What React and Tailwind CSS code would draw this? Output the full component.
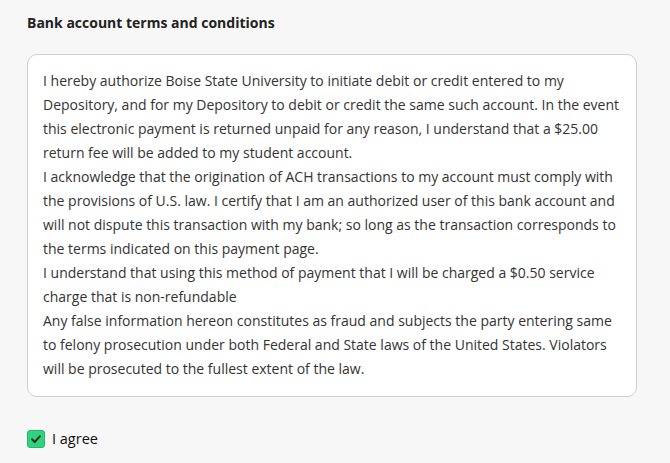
export default function App() {
  return (
    <div className="min-h-[463px] bg-[#f7f7f7] px-[27px] pt-[12px] text-[#333] [font-family:'Open_Sans',sans-serif]">
      <h2 className="text-[14px] leading-[22px] font-bold text-[#222]">
        Bank account terms and conditions
      </h2>
      <div className="mt-[20px] w-[610px] rounded-[10px] border border-[#cfcfcf] bg-white pl-[15px] pr-[12px] pt-[14px] pb-[15px] text-[14px] leading-[24px]">
        <p>
          I hereby authorize Boise State University to initiate debit or credit entered to my
          Depository, and for my Depository to debit or credit the same such account. In the event
          this electronic payment is returned unpaid for any reason, I understand that a $25.00
          return fee will be added to my student account.
        </p>
        <p>
          I acknowledge that the origination of ACH transactions to my account must comply with
          the provisions of U.S. law. I certify that I am an authorized user of this bank account and
          will not dispute this transaction with my bank; so long as the transaction corresponds to
          the terms indicated on this payment page.
        </p>
        <p>
          I understand that using this method of payment that I will be charged a $0.50 service
          charge that is non-refundable
        </p>
        <p>
          Any false information hereon constitutes as fraud and subjects the party entering same
          to felony prosecution under both Federal and State laws of the United States. Violators
          will be prosecuted to the fullest extent of the law.
        </p>
      </div>
      <label className="mt-[32px] flex items-center gap-[7px]">
        <span className="flex h-[18px] w-[18px] items-center justify-center rounded-[3px] border border-[#27b56a] bg-[#2fd47f]">
          <svg width="12" height="12" viewBox="0 0 12 12" fill="none">
            <path d="M2 6.3 4.7 9 10 3.2" stroke="#1f2a24" strokeWidth="2" strokeLinecap="round" strokeLinejoin="round" />
          </svg>
        </span>
        <span className="text-[14.5px] leading-[20px] text-[#111]">I agree</span>
      </label>
    </div>
  );
}
